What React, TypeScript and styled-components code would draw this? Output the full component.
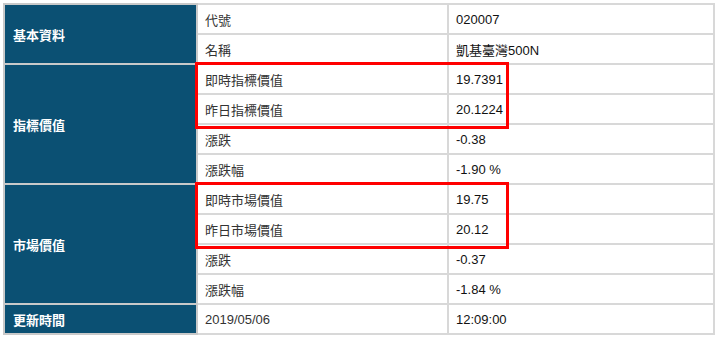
import React from 'react';
import styled, { createGlobalStyle } from 'styled-components';

const GlobalStyle = createGlobalStyle`
  html, body {
    margin: 0;
    padding: 0;
    background: #fff;
  }
  body {
    font-family: 'Liberation Sans', Arial, 'Noto Sans CJK TC', sans-serif;
    font-size: 13px;
    color: #222;
  }
`;

const Page = styled.div`
  position: relative;
  width: 720px;
  height: 341px;
  padding: 3px;
  box-sizing: border-box;
`;

const Table = styled.table`
  width: 712px;
  border-collapse: collapse;
  border: 2px solid #cdcdcd;
  table-layout: fixed;
`;

const Col = styled.col<{ $w?: number }>`
  width: ${p => (p.$w ? `${p.$w}px` : 'auto')};
`;

const Row = styled.tr`
  height: 30px;
`;

const GroupCell = styled.th`
  background: #0b5073;
  color: #fff;
  font-weight: bold;
  text-align: left;
  padding: 0 8px;
  border: 2px solid #c9c9c9;
  font-family: 'Liberation Sans', Arial, 'Noto Sans CJK TC', sans-serif;
`;

const LabelCell = styled.td`
  padding: 0 7px;
  border: 2px solid #d8d8d8;
  color: #333;
`;

const ValueCell = styled.td`
  padding: 0 7px;
  border: 2px solid #d8d8d8;
  color: #111;
`;

const Highlight = styled.div<{ $top: number }>`
  position: absolute;
  left: 195px;
  top: ${p => p.$top}px;
  width: 314px;
  height: 67px;
  box-sizing: border-box;
  border: 3px solid #f00;
  pointer-events: none;
`;

type Group = { title: string; rows: [string, string][] };

const groups: Group[] = [
  {
    title: '基本資料',
    rows: [
      ['代號', '020007'],
      ['名稱', '凱基臺灣500N'],
    ],
  },
  {
    title: '指標價值',
    rows: [
      ['即時指標價值', '19.7391'],
      ['昨日指標價值', '20.1224'],
      ['漲跌', '-0.38'],
      ['漲跌幅', '-1.90 %'],
    ],
  },
  {
    title: '市場價值',
    rows: [
      ['即時市場價值', '19.75'],
      ['昨日市場價值', '20.12'],
      ['漲跌', '-0.37'],
      ['漲跌幅', '-1.84 %'],
    ],
  },
  {
    title: '更新時間',
    rows: [['2019/05/06', '12:09:00']],
  },
];

export default function App() {
  return (
    <Page>
      <GlobalStyle />
      <Table>
        <colgroup>
          <Col $w={193} />
          <Col $w={251} />
          <Col />
        </colgroup>
        <tbody>
          {groups.map(g =>
            g.rows.map(([label, value], i) => (
              <Row key={g.title + label}>
                {i === 0 && <GroupCell rowSpan={g.rows.length}>{g.title}</GroupCell>}
                <LabelCell>{label}</LabelCell>
                <ValueCell>{value}</ValueCell>
              </Row>
            ))
          )}
        </tbody>
      </Table>
      <Highlight $top={62} />
      <Highlight $top={182} />
    </Page>
  );
}
